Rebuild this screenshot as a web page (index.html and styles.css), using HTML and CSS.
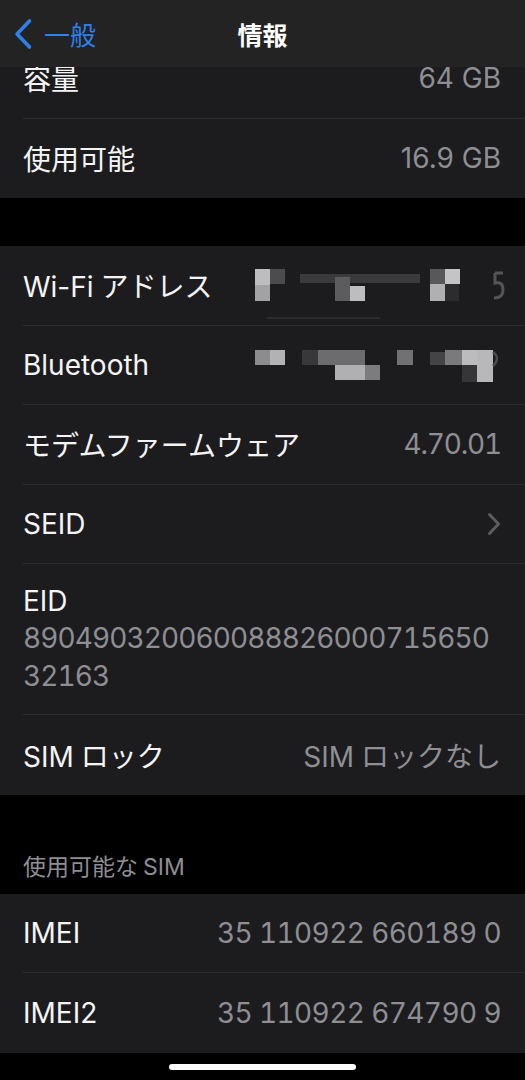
FILE: index.html
```html
<!DOCTYPE html>
<html lang="ja">
  <head>
    <meta charset="UTF-8" />
    <meta name="viewport" content="width=device-width, initial-scale=1.0" />
    <title>情報</title>
    <link rel="stylesheet" href="styles.css">
  </head>
  <body>
    <div class="screen">
      <header class="nav">
        <a href="#" class="back">
          <svg class="back-icon" width="20" height="32" viewBox="0 0 20 32">
            <path d="M16.5 3 L4 16 L16.5 29" fill="none" stroke="#2f80ed" stroke-width="3.6" stroke-linecap="round" stroke-linejoin="round" />
          </svg>
          <span>一般</span>
        </a>
        <h1 class="title">情報</h1>
        <span></span>
      </header>

      <main class="content">
        <section class="group group-first">
          <div class="row">
            <span class="label">容量</span>
            <span class="value">64 GB</span>
          </div>
          <div class="row">
            <span class="label">使用可能</span>
            <span class="value">16.9 GB</span>
          </div>
        </section>

        <section class="group">
          <div class="row">
            <span class="label"><span class="latin">Wi-Fi</span>アドレス</span>
            <svg class="mosaic" width="256" height="40" viewBox="0 0 256 40">
              <g class="mosaic-blur">
                <rect x="48" y="9" width="120" height="9" fill="#3a3a3c" />
                <rect x="3" y="4" width="15" height="16" fill="#bdbdbf" />
                <rect x="3" y="20" width="15" height="16" fill="#a2a2a4" />
                <rect x="18" y="4" width="15" height="15" fill="#4c4c4e" />
                <rect x="83" y="12" width="15" height="24" fill="#5c5c5e" />
                <rect x="98" y="21" width="15" height="15" fill="#bdbdbf" />
                <rect x="178" y="4" width="15" height="15" fill="#58585a" />
                <rect x="178" y="19" width="15" height="17" fill="#b0b0b2" />
                <rect x="193" y="4" width="15" height="15" fill="#c4c4c6" />
                <rect x="193" y="19" width="14" height="17" fill="#2c2c2e" />
                <path d="M243 8 h8 M243 8 v10 q8 -2 8 7 q0 8 -9 8" fill="none" stroke="#555557" stroke-width="3" />
                <rect x="15" y="52" width="113" height="2" fill="#2c2c2e" />
              </g>
            </svg>
          </div>
          <div class="row">
            <span class="label">Bluetooth</span>
            <svg class="mosaic" width="256" height="40" viewBox="0 0 256 40">
              <g class="mosaic-blur">
                <rect x="3" y="5" width="15" height="15" fill="#8c8c8e" />
                <rect x="18" y="5" width="15" height="15" fill="#b2b2b4" />
                <rect x="50" y="5" width="16" height="15" fill="#38383a" />
                <rect x="66" y="5" width="47" height="15" fill="#6c6c6e" />
                <rect x="83" y="20" width="30" height="15" fill="#b0b0b2" />
                <rect x="113" y="20" width="15" height="15" fill="#7c7c7e" />
                <rect x="145" y="5" width="16" height="15" fill="#717173" />
                <rect x="178" y="7" width="15" height="13" fill="#444446" />
                <rect x="193" y="5" width="17" height="15" fill="#7a7a7c" />
                <rect x="210" y="5" width="15" height="15" fill="#bcbcbe" />
                <rect x="225" y="5" width="16" height="32" fill="#b8b8ba" />
                <rect x="210" y="20" width="15" height="17" fill="#363638" />
                <path d="M241 7 q8 6 0 14" fill="none" stroke="#4a4a4c" stroke-width="2.5" />
              </g>
            </svg>
          </div>
          <div class="row">
            <span class="label">モデムファームウェア</span>
            <span class="value value-num value-ver">4.70.01</span>
          </div>
          <div class="row">
            <span class="label">SEID</span>
            <svg class="chevron" width="14" height="24" viewBox="0 0 14 24">
              <path d="M2.5 2.5 L11.5 12 L2.5 21.5" fill="none" stroke="#5c5c60" stroke-width="3" stroke-linecap="round" stroke-linejoin="round" />
            </svg>
          </div>
          <div class="row row-stack">
            <span class="label">EID</span>
            <span class="value value-num value-eid">89049032006008882600071565032163</span>
          </div>
          <div class="row">
            <span class="label"><span class="latin">SIM</span>ロック</span>
            <span class="value"><span class="latin">SIM</span>ロックなし</span>
          </div>
        </section>

        <h2 class="group-title">使用可能な<span class="latin-before">SIM</span></h2>

        <section class="group">
          <div class="row">
            <span class="label">IMEI</span>
            <span class="value value-num">35 110922 660189 0</span>
          </div>
          <div class="row">
            <span class="label">IMEI2</span>
            <span class="value value-num">35 110922 674790 9</span>
          </div>
        </section>
      </main>

      <div class="home-bar"></div>
    </div>
  </body>
</html>
```

FILE: styles.css
```css
* {
  margin: 0;
  padding: 0;
  box-sizing: border-box;
}
body {
  background-color: #000;
  font-family: Inter, "Noto Sans CJK JP", sans-serif;
  color: #f4f4f4;
}
.screen {
  position: relative;
  width: 525px;
  height: 1080px;
  overflow: hidden;
  background-color: #000;
}

/* nav bar sits over the scrolled list */
.nav {
  position: absolute;
  top: 0;
  left: 0;
  right: 0;
  z-index: 2;
  height: 67px;
  display: grid;
  grid-template-columns: 1fr auto 1fr;
  align-items: center;
  background-color: #232323;
}
.back {
  display: flex;
  align-items: center;
  gap: 11px;
  padding-left: 13px;
  color: #2f80ed;
  text-decoration: none;
  font-size: 26px;
}
.back-icon {
  display: block;
}
.title {
  font-size: 25px;
  font-weight: 700;
  color: #fff;
}

.content {
  padding-top: 39px;
}
.group {
  background-color: #1c1c1e;
}
.group + .group {
  margin-top: 48px;
}
.row {
  display: flex;
  align-items: center;
  justify-content: space-between;
  min-height: 79.5px;
  margin-left: 23px;
  padding-right: 24px;
  border-bottom: 1px solid #2e2e31;
}
.row:last-child {
  border-bottom: none;
}
.label {
  font-size: 28px;
  white-space: nowrap;
}
.latin {
  margin-right: 7px;
}
.latin-before {
  margin-left: 5px;
}
.value {
  font-size: 28px;
  color: #8e8e93;
  white-space: nowrap;
}
.value-num {
  font-variant-numeric: tabular-nums;
  letter-spacing: -0.6px;
}
.value-ver {
  letter-spacing: -1.2px;
}
.row-stack {
  flex-direction: column;
  align-items: flex-start;
  justify-content: flex-start;
  min-height: 150px;
  padding-top: 19px;
  padding-bottom: 19px;
}
.row-stack .label {
  line-height: 36px;
}
.value-eid {
  width: 480px;
  line-height: 38px;
  letter-spacing: -0.9px;
  white-space: normal;
  word-break: break-all;
}
.mosaic {
  display: block;
  margin-right: -7px;
  overflow: visible;
}
.mosaic-blur {
  filter: blur(0.7px);
}
.chevron {
  display: block;
}

.group-title {
  padding: 57px 23px 12px;
  font-size: 23px;
  font-weight: 400;
  line-height: 30px;
  color: #8e8e93;
}

.home-bar {
  width: 187px;
  height: 6px;
  margin: 11px auto 0;
  border-radius: 3px;
  background-color: #fff;
}
```
